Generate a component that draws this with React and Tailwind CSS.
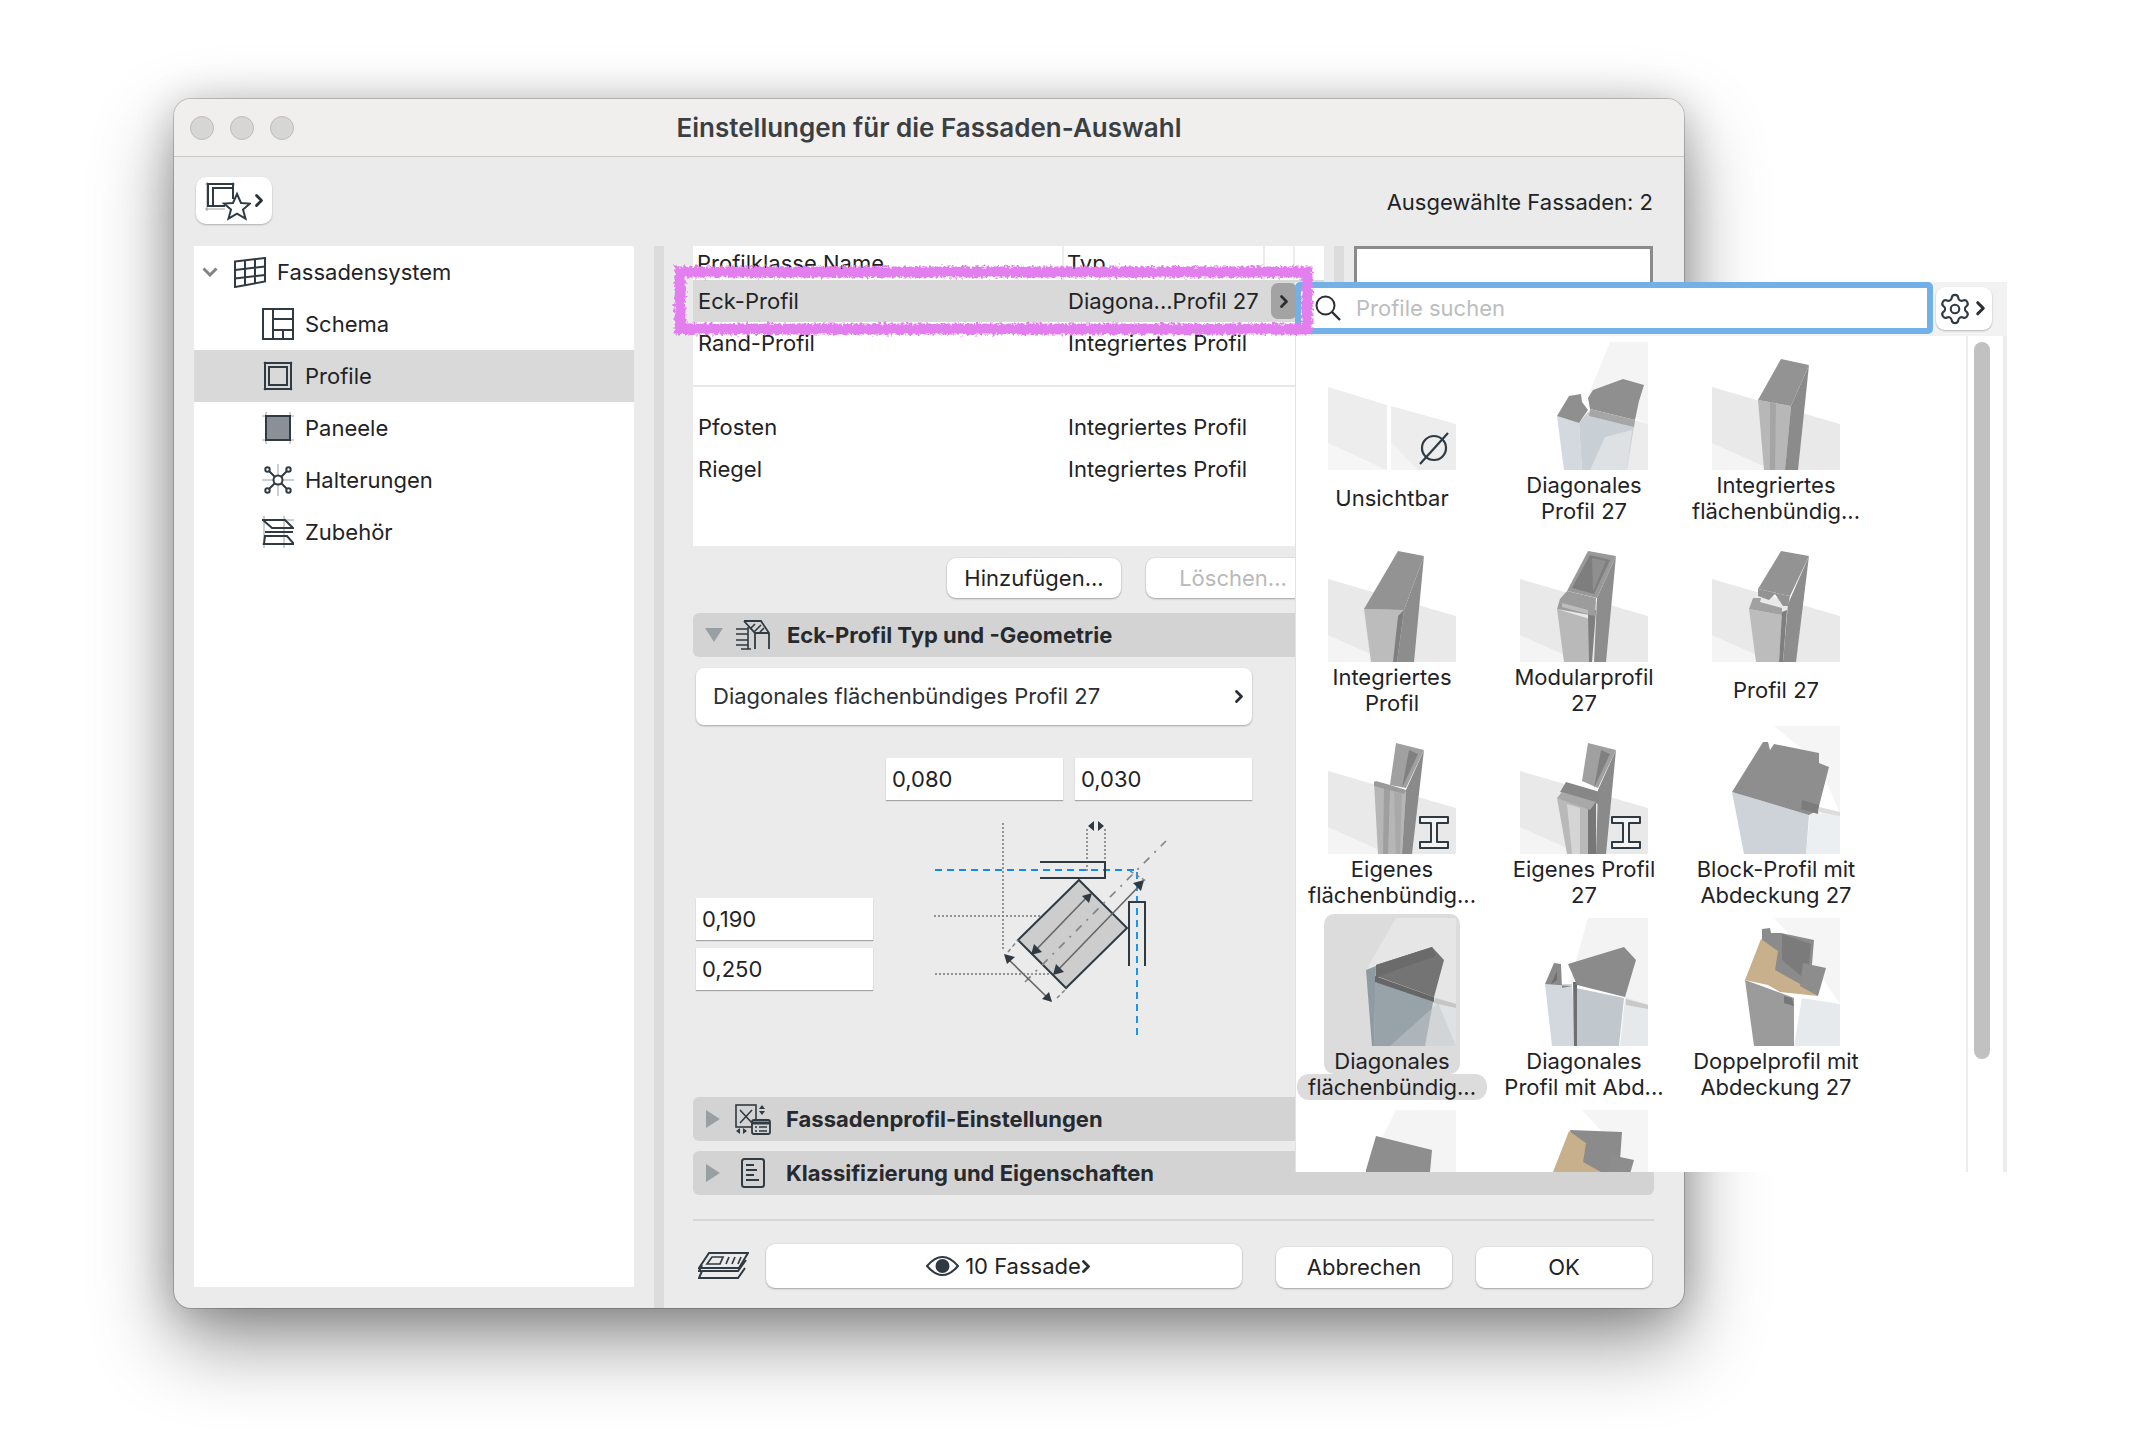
import React from "react";
import { Settings } from "lucide-react";

const INK = "#2f3a42";

const FRAME = ({ children, w = 32, h = 32, vb, className = "" }) => (
  <svg width={w} height={h} viewBox={vb || `0 0 ${w} ${h}`} fill="none" stroke={INK} strokeWidth="2" className={`shrink-0 ${className}`}>
    {children}
  </svg>
);

const Chev = ({ size = 12, sw = 2.6, color = "#2b2f33", className = "" }) => (
  <svg width={size} height={size * 1.5} viewBox="0 0 12 18" fill="none" stroke={color} strokeWidth={sw * 1.3} strokeLinecap="round" strokeLinejoin="round" className={`shrink-0 ${className}`}>
    <path d="M3 3l6 6-6 6" />
  </svg>
);

const IconFacade = () => (
  <FRAME w={32} h={31}>
    <path d="M1 4.5L31 1v23.5L1 30z" />
    <path d="M1 13l30-3.5M1 21.5l30-3.5M11 3.5v25.5M21 2.5v23.5" />
  </FRAME>
);
const IconSchema = () => (
  <FRAME>
    <rect x="1" y="1" width="30" height="30" />
    <path d="M11 1v30M11 11h20M11 22h20M21 22v9" />
  </FRAME>
);
const IconProfile = () => (
  <FRAME>
    <path d="M1 3h30M1 29h30M3 1v30M29 1v30" stroke="#9aa0a4" strokeWidth="1" />
    <rect x="3" y="3" width="26" height="26" />
    <rect x="7" y="7" width="18" height="18" />
  </FRAME>
);
const IconPanel = () => (
  <FRAME>
    <path d="M0 4h32M0 28h32M4 0v32M28 0v32" stroke="#9aa0a4" strokeWidth="1" />
    <rect x="4" y="4" width="24" height="24" fill="#8a9095" />
  </FRAME>
);
const IconBracket = () => (
  <FRAME>
    <path d="M16 0v32M0 16h32" stroke="#9aa0a4" strokeWidth="1" />
    <circle cx="16" cy="16" r="4.5" fill="#fff" />
    <path d="M12.5 12.5L7 7M19.5 12.5L25 7M12.5 19.5L7 25M19.5 19.5L25 25" />
    <circle cx="5.5" cy="5.5" r="2.2" fill="#fff" />
    <circle cx="26.5" cy="5.5" r="2.2" fill="#fff" />
    <circle cx="5.5" cy="26.5" r="2.2" fill="#fff" />
    <circle cx="26.5" cy="26.5" r="2.2" fill="#fff" />
  </FRAME>
);
const IconAccessory = () => (
  <FRAME>
    <path d="M2 0v32M22 0v32M0 4h32M0 28h32" stroke="#9aa0a4" strokeWidth="1" />
    <path d="M1 4l9 8h21l-8-8z" />
    <path d="M3 16h28" />
    <path d="M3 20l-1 8h30l-7-8z" />
  </FRAME>
);

const SideRow = ({ icon, label, selected, top }) => (
  <div className={`flex h-[52px] items-center ${top ? "pl-2" : "pl-[68px]"} ${selected ? "bg-[#d9d9d9]" : ""}`}>
    {top && (
      <svg width="16" height="10" viewBox="0 0 16 10" fill="none" stroke="#808487" strokeWidth="3" className="mr-4 shrink-0">
        <path d="M1.5 1.5L8 8l6.5-6.5" />
      </svg>
    )}
    {icon}
    <span className="ml-[11px]">{label}</span>
  </div>
);

const Button = ({ children, className = "" }) => (
  <div className={`flex items-center justify-center rounded-[9px] bg-white shadow-[0_1px_2px_rgba(0,0,0,0.28),0_0_0_1px_rgba(0,0,0,0.03)] ${className}`}>{children}</div>
);

const Tri = ({ down }) =>
  down ? (
    <svg width="18" height="14" viewBox="0 0 18 14" className="ml-3 shrink-0"><path d="M0 0h18l-9 14z" fill="#98a0a4" /></svg>
  ) : (
    <svg width="14" height="18" viewBox="0 0 14 18" className="ml-[13px] shrink-0"><path d="M0 0l14 9-14 9z" fill="#98a0a4" /></svg>
  );

const Section = ({ down, icon, title, iconBox }) => (
  <div className="flex h-[44px] items-center rounded-[6px] bg-[#d3d3d3]">
    <Tri down={down} />
    <div className={`flex items-center justify-center ${iconBox}`}>{icon}</div>
    <span className="font-bold text-[#262a2e]">{title}</span>
  </div>
);

const IconEck = () => (
  <FRAME w={34} h={30}>
    <path d="M0 9h12M0 14h12M0 20h12M0 25h12M12 7v22M5 29h10" strokeWidth="1.6" />
    <path d="M8 1h17l8 12v16M19 13v16M8 1l11 12h14" strokeWidth="1.8" />
    <path d="M14 9l5-5M18 12l7-7M24 12l4-4" strokeWidth="1.6" />
  </FRAME>
);
const IconSettingsSec = () => (
  <FRAME w={36} h={31}>
    <rect x="1" y="1" width="20" height="22" strokeWidth="1.6" />
    <path d="M5 6l12 13M17 6L5 19" strokeWidth="1.6" />
    <path d="M27 1l-3 4h6zM27 11l-3-4h6z" fill={INK} stroke="none" />
    <path d="M1 27l4-3v6zM12 27l-4-3v6z" transform="translate(0 0)" fill={INK} stroke="none" />
    <rect x="17" y="16" width="18" height="14" rx="2" fill="#d3d3d3" strokeWidth="1.8" />
    <path d="M17 19h18" strokeWidth="3" />
    <path d="M20 23h2M20 27h2M24 23h8M24 27h8" strokeWidth="1.5" />
  </FRAME>
);
const IconDoc = () => (
  <FRAME w={24} h={30}>
    <rect x="1" y="1" width="22" height="28" rx="2.5" />
    <path d="M5 7h8M5 12h11M5 17h8M5 22h13" strokeWidth="1.8" />
  </FRAME>
);
const IconLayers = () => (
  <FRAME w={51} h={28}>
    <path d="M11 2h39l-9 15H1z" />
    <path d="M14 6h11l-3 7H9zM31 6l-3 7M37 6l-3 7M43 6l-3 7" strokeWidth="1.7" />
    <path d="M4 14l-3 6h39l8-11M4 20l-3 7h39l7-10" />
  </FRAME>
);

const Input = ({ value, className = "" }) => (
  <div className={`flex h-[42px] w-[177px] items-center bg-white pl-[6px] shadow-[0_1px_1px_rgba(0,0,0,0.3)] ${className}`}>{value}</div>
);

const Diagram = () => (
  <svg width="300" height="271" viewBox="0 9 300 271" fill="none" className="ml-[28px] shrink-0">
    <g stroke="#777" strokeWidth="1.5" strokeDasharray="2 2">
      <path d="M103 32v128M34 125h136M35 183h115M187 38v42M205 38v32" />
    </g>
    <path d="M35 79h202v169" stroke="#0a8cf0" strokeWidth="1.8" strokeDasharray="7 5" />
    <path d="M140 71h65v16h-65M229 175v-64h16v64" stroke={INK} strokeWidth="2" />
    <path d="M179 89l48 48-61 60-48-48z" fill="#cdcdcd" stroke={INK} strokeWidth="2" />
    <path d="M125 191L266 50" stroke="#858585" strokeWidth="1.7" strokeDasharray="8 7 2 7" />
    <path d="M108 161l10-12M157 207l10-10M230 80l16 10" stroke="#858585" strokeWidth="1.5" strokeDasharray="4 3" />
    <path d="M188 105l-55 57M243 91l-88 91M106 166l45 44" stroke="#666" strokeWidth="1.6" />
    <g fill={INK}>
      <path d="M192 102l-3 10-7-7zM131 164l3-11 8 8zM244 89l-3 11-8-8zM153 184l3-11 8 8zM104 163l11 3-8 7zM152 211l-3-10-7 7z" />
      <path d="M188 35l6-5v10zM204 35l-6-5v10z" />
    </g>
  </svg>
);

const Panel = () => (
  <>
    <polygon points="0,45 128,82 128,128 0,128" fill="#e9e9e9" />
    <polygon points="0,101 60,128 0,128" fill="#f4f4f4" />
  </>
);
const Glass = ({ l = 68, b = 54, c = "#f4f4f4" }) => <polygon points={`${l + 22},0 128,0 128,82 ${l},${b}`} fill={c} />;

const T = {
  unsichtbar: (
    <>
      <polygon points="0,45 59,63 59,128 0,128" fill="#ededed" />
      <polygon points="0,101 59,128 0,128" fill="#f6f6f6" />
      <polygon points="63,64 128,82 128,128 63,128" fill="#ededed" />
      <polygon points="63,100 90,128 63,128" fill="#f4f4f4" />
      <circle cx="106" cy="106" r="12" fill="none" stroke={INK} strokeWidth="2.2" />
      <path d="M92 122L120 91" stroke={INK} strokeWidth="2.2" />
    </>
  ),
  diag27: (
    <>
      <Glass />
      <polygon points="115,78 128,82 128,128 105,128" fill="#ececec" />
      <polygon points="37,74 59,81 62,128 44,128" fill="#d3d9de" />
      <polygon points="59,81 68,70 115,78 107,128 62,128" fill="#c8d0d6" />
      <polygon points="70,128 85,95 112,88 107,128" fill="#dde1e4" />
      <polygon points="37,74 49,54 61,52 62,60 68,68 59,81" fill="#8f8f8f" />
      <polygon points="73,48 103,37 124,43 119,59 115,78 70,67 68,56" fill="#8f8f8f" />
      <polygon points="70,67 115,78 114,85 69,74" fill="#a6a6a6" />
    </>
  ),
  intFlush: (
    <>
      <Panel />
      <polygon points="46,58 79,64 73,128 52,128" fill="#b7b7b7" />
      <polygon points="58,60 64,62 63,128 58,128" fill="#a5a5a5" />
      <polygon points="97,23 79,64 73,128 86,128" fill="#8b8b8b" />
      <polygon points="69,17 97,23 79,64 46,58" fill="#939393" />
    </>
  ),
  intProfil: (
    <>
      <Panel />
      <polygon points="36,75 76,76 69,128 43,128" fill="#bcbcbc" />
      <polygon points="70,82 76,76 69,128 65,128" fill="#7f7f7f" />
      <polygon points="96,22 76,76 69,128 86,128" fill="#8d8d8d" />
      <polygon points="70,17 96,22 76,76 36,75" fill="#939393" />
    </>
  ),
  modular: (
    <>
      <Panel />
      <polygon points="37,75 70,85 70,128 44,128" fill="#b9b9b9" />
      <polygon points="68,80 76,76 72,128 69,128" fill="#7f7f7f" />
      <polygon points="96,22 77,64 74,128 86,128" fill="#8d8d8d" />
      <polygon points="68,17 96,22 77,64 47,57" fill="#999" />
      <polygon points="70,21 90,26 74,60 52,54" fill="#7e7e7e" />
      <polygon points="72,24 86,27 73,58" fill="#8f8f8f" />
      <polygon points="40,65 47,57 76,64 75,82 37,75" fill="#9c9c9c" />
      <polygon points="42,69 68,76 68,80 42,73" fill="#bdbdbd" />
    </>
  ),
  profil27: (
    <>
      <Panel />
      <polygon points="37,75 70,81 67,128 44,128" fill="#bcbcbc" />
      <polygon points="70,78 75,76 71,128 67,128" fill="#7f7f7f" />
      <polygon points="97,22 76,70 71,128 84,128" fill="#8d8d8d" />
      <polygon points="69,17 97,22 78,62 46,55" fill="#939393" />
      <polygon points="46,55 78,62 76,72 71,72 63,60 57,66 46,62" fill="#939393" />
      <polygon points="37,75 41,64 49,64 48,68 70,74 70,81" fill="#a1a1a1" />
    </>
  ),
  eigenFlush: (
    <>
      <Panel />
      <polygon points="46,56 78,64 74,128 50,128" fill="#b6b6b6" />
      <polygon points="56,62 62,64 60,128 55,128" fill="#9f9f9f" />
      <polygon points="66,66 74,68 72,128 68,128" fill="#a9a9a9" />
      <polygon points="96,24 78,64 74,128 84,128" fill="#8a8a8a" />
      <polygon points="68,17 96,24 78,62 62,59" fill="#a0a0a0" />
      <polygon points="81,24 74,62 90,28" fill="#808080" />
      <polygon points="46,56 48,55 62,59 78,64 76,68 46,60" fill="#9a9a9a" />
      <path d="M92 91h28v6h-11v19h11v6H92v-6h11V97H92z" fill="#f4f4f4" stroke={INK} strokeWidth="2" strokeLinejoin="round" />
    </>
  ),
  eigen27: (
    <>
      <Panel />
      <polygon points="37,72 70,76 68,128 47,128" fill="#b9b9b9" />
      <polygon points="47,78 60,82 60,128 52,128" fill="#d5d5d5" />
      <polygon points="68,80 76,76 76,128 68,128" fill="#777" />
      <polygon points="96,24 78,64 76,128 86,128" fill="#8a8a8a" />
      <polygon points="68,17 96,24 78,62 62,55" fill="#a0a0a0" />
      <polygon points="81,24 74,62 90,28" fill="#808080" />
      <polygon points="46,56 80,66 78,78 40,66" fill="#878787" />
      <polygon points="37,72 42,66 76,76 70,84" fill="#a8a8a8" />
      <path d="M92 91h28v6h-11v19h11v6H92v-6h11V97H92z" fill="#f4f4f4" stroke={INK} strokeWidth="2" strokeLinejoin="round" />
    </>
  ),
  block: (
    <>
      <polygon points="62,0 128,0 128,88 107,37" fill="#f5f5f5" />
      <polygon points="98,87 128,88 128,128 94,128" fill="#eceff1" />
      <polygon points="20,66 97,89 94,128 32,128" fill="#cdd3d8" />
      <polygon points="51,16 56,16 58,24 62,18 107,27 107,37 117,41 106,84 97,89 20,66" fill="#8e8e8e" />
      <polygon points="90,74 107,79 106,88 89,83" fill="#7c7c7c" />
      <polygon points="107,81 128,86 128,90 106,86" fill="#dcdcdc" />
    </>
  ),
  diagFlushSel: (
    <>
      <polygon points="68,0 128,0 128,86 48,64 38,52" fill="#e6e6e6" />
      <polygon points="106,79 128,85 128,128 97,128" fill="#dfe2e4" />
      <polygon points="38,52 48,48 46,128 44,128" fill="#8f9ba3" />
      <polygon points="47,64 106,79 97,128 46,128" fill="#98a2a9" />
      <polygon points="62,128 110,85 128,128 97,128" fill="#c4c8cb" opacity="0.5" />
      <polygon points="48,47 104,29 116,42 106,79 48,58" fill="#747474" />
      <polygon points="48,47 104,29 108,38 60,55 48,60" fill="#6b6b6b" />
      <polygon points="47,58 106,79 106,84 47,64" fill="#666" />
      <polygon points="107,80 128,86 128,90 106,85" fill="#c6c6c6" />
    </>
  ),
  diagAbd: (
    <>
      <polygon points="68,0 128,0 128,86 50,64" fill="#f3f3f3" />
      <polygon points="105,79 128,86 128,128 100,128" fill="#e6e9eb" />
      <polygon points="25,66 52,66 56,128 32,128" fill="#d2d8dd" />
      <polygon points="56,70 104,80 99,128 56,128" fill="#c0c8ce" />
      <polygon points="53,64 57,64 57,128 54,128" fill="#6f6f6f" />
      <polygon points="25,66 34,45 41,46 42,70 52,68" fill="#8a8a8a" />
      <polygon points="31,66 37,53 37,62" fill="#6f6f6f" />
      <polygon points="48,46 104,29 116,42 105,79 57,67" fill="#8b8b8b" />
      <polygon points="106,81 128,87 128,91 106,87" fill="#c9c9c9" />
    </>
  ),
  doppel: (
    <>
      <polygon points="62,0 128,0 128,86 90,30" fill="#f5f5f5" />
      <polygon points="90,80 128,86 128,128 82,128" fill="#e7eaec" />
      <polygon points="33,62 82,80 82,128 42,128" fill="#9b9b9b" />
      <polygon points="50,11 58,10 59,15 69,15 102,22 98,70 76,75 50,30" fill="#8b8b8b" />
      <polygon points="70,16 99,26 95,63 70,42" fill="#7b7b7b" />
      <polygon points="33,62 49,21 66,33 63,52 90,67 106,78 68,74 56,67" fill="#c9b08d" />
      <polygon points="91,45 114,50 106,78 88,68" fill="#8d8d8d" />
      <polygon points="72,78 80,80 82,88 72,85" fill="#777" />
    </>
  ),
  row5a: (
    <>
      <polygon points="68,0 128,0 128,128 38,60" fill="#f4f4f4" />
      <polygon points="38,60 48,26 104,40 96,128 38,128" fill="#8e8e8e" />
    </>
  ),
  row5b: (
    <>
      <polygon points="62,0 128,0 128,86 90,30" fill="#f5f5f5" />
      <polygon points="50,20 102,22 98,80 60,60" fill="#8b8b8b" />
      <polygon points="33,62 49,21 66,33 63,52 90,67 106,78 68,74 56,67" fill="#c9b08d" />
      <polygon points="91,45 114,50 106,78 88,68" fill="#8d8d8d" />
    </>
  ),
};

const items = [
  { t: "unsichtbar", l: ["Unsichtbar"] },
  { t: "diag27", l: ["Diagonales", "Profil 27"] },
  { t: "intFlush", l: ["Integriertes", "flächenbündig..."] },
  { t: "intProfil", l: ["Integriertes", "Profil"] },
  { t: "modular", l: ["Modularprofil", "27"] },
  { t: "profil27", l: ["Profil 27"] },
  { t: "eigenFlush", l: ["Eigenes", "flächenbündig..."] },
  { t: "eigen27", l: ["Eigenes Profil", "27"] },
  { t: "block", l: ["Block-Profil mit", "Abdeckung 27"] },
  { t: "diagFlushSel", l: ["Diagonales", "flächenbündig..."], sel: true },
  { t: "diagAbd", l: ["Diagonales", "Profil mit Abd..."] },
  { t: "doppel", l: ["Doppelprofil mit", "Abdeckung 27"] },
  { t: "row5a", l: [] },
  { t: "row5b", l: [] },
];

const Cell = ({ t, l, sel }) => (
  <div className="flex w-[192px] flex-col items-center">
    <div className={`rounded-t-[10px] px-[4px] pb-[2px] pt-[4px] ${sel ? "bg-[#dcdcdc]" : ""}`}>
      <svg width="128" height="128" viewBox="0 0 128 128" className="block">{T[t]}</svg>
    </div>
    <div className="flex h-[52px] flex-col items-center justify-center text-center leading-[26px]">
      {l.map((s, i) => (
        <div key={s} className={sel ? (i === 0 ? "w-[136px] rounded-b-[10px] bg-[#dcdcdc]" : "w-[190px] rounded-[12px] bg-[#dcdcdc]") : "whitespace-nowrap"}>{s}</div>
      ))}
    </div>
  </div>
);

const Popover = () => (
  <div className="absolute left-[1295px] top-[282px] flex h-[890px] w-[712px] flex-col overflow-hidden bg-white">
    <div className="flex h-[54px] shrink-0 items-start bg-[#f2f2f2]">
      <div className="flex h-[52px] w-[638px] items-center rounded-[5px] border-[6px] border-[#72b0e8] bg-white pl-[14px]">
        <svg width="26" height="26" viewBox="0 0 26 26" fill="none" stroke="#2b2f33" strokeWidth="2" className="shrink-0">
          <circle cx="10.5" cy="10.5" r="9" />
          <path d="M17 17l8 8" strokeWidth="2.4" />
        </svg>
        <span className="ml-[15px] text-[#bdbdbd]">Profile suchen</span>
      </div>
      <div className="ml-[3px] mt-[5px] flex h-[43px] w-[56px] items-center rounded-[9px] bg-white pl-[2px] shadow-[0_1px_2px_rgba(0,0,0,0.25)]">
        <Settings size={34} strokeWidth={1.5} color={INK} />
        <Chev size={11} className="ml-[3px]" />
      </div>
    </div>
    <div className="flex flex-1 overflow-hidden">
      <div className="grid w-[671px] shrink-0 grid-cols-[repeat(3,192px)] content-start gap-y-[6px] border-l border-[#e2e2e2] pt-[2px]">
        {items.map((it) => <Cell key={it.t} {...it} />)}
      </div>
      <div className="flex flex-1 justify-start border-l-2 border-r-4 border-[#ececec] pl-[6px] pt-[6px]">
        <div className="h-[717px] w-[16px] rounded-full bg-[#c1c1c1]" />
      </div>
    </div>
  </div>
);

const Highlight = () => (
  <svg width="660" height="90" viewBox="0 0 660 90" fill="none" className="absolute left-[664px] top-[256px]">
    <filter id="rough" x="-5%" y="-30%" width="110%" height="160%">
      <feTurbulence type="fractalNoise" baseFrequency="0.35" numOctaves="2" seed="4" />
      <feDisplacementMap in="SourceGraphic" scale="7" />
    </filter>
    <rect x="16" y="16" width="627" height="57" stroke="#e27eed" strokeWidth="11" filter="url(#rough)" />
  </svg>
);

const TableRow = ({ a, b, selected }) => (
  <div className={`flex h-[42px] items-center pl-[5px] ${selected ? "bg-[#d9d9d9]" : ""}`}>
    <span className="w-[370px]">{a}</span>
    <span>{b}</span>
    {selected && (
      <div className="ml-[12px] flex h-[36px] w-[26px] items-center justify-center rounded-[7px] bg-[#a3a3a3]">
        <Chev size={10} />
      </div>
    )}
  </div>
);

export default function App() {
  return (
    <div className="relative h-[1456px] w-[2130px] overflow-hidden bg-white pl-[174px] pt-[99px] text-[22px] text-[#1f2326] [font-family:Inter,'Liberation_Sans',sans-serif]">
      <div className="flex h-[1209px] w-[1510px] flex-col overflow-hidden rounded-[17px] bg-[#ebebeb] shadow-[0_0_0_1px_rgba(0,0,0,0.18),0_34px_80px_rgba(0,0,0,0.42),0_4px_40px_rgba(0,0,0,0.2)]">
        <div className="relative flex h-[58px] shrink-0 items-center justify-center border-b border-[#c9c9c9] bg-[#f0efee]">
          <div className="absolute left-4 flex gap-4">
            {[0, 1, 2].map((i) => (
              <div key={i} className="h-6 w-6 rounded-full border border-[#bdbdbb] bg-[#d6d6d4]" />
            ))}
          </div>
          <span className="text-[26px] font-semibold text-[#3c3f42]">Einstellungen für die Fassaden-Auswahl</span>
        </div>

        <div className="flex h-[89px] shrink-0 items-start justify-between pl-[22px] pr-[31px] pt-5">
          <div className="flex h-[47px] w-[76px] items-center rounded-[10px] bg-white pl-[9px] shadow-[0_1px_2px_rgba(0,0,0,0.25)]">
            <svg width="46" height="40" viewBox="0 0 46 40" fill="none" stroke={INK} strokeWidth="2" className="shrink-0">
              <path d="M0 3h30M0 28h20M2 1v29M28 1v16" stroke="#9aa0a4" strokeWidth="1" />
              <path d="M20 25H3V3h25v15" />
              <path d="M8 25V7h20" />
              <path d="M32 13l4 9 9 .6-7 6 2.5 9-8.500-5-8.500 5L26 28.600l-7-6 9-.600z" fill="#fff" />
            </svg>
            <Chev size={10} className="ml-[3px]" />
          </div>
          <span className="mt-[9px]">Ausgewählte Fassaden: 2</span>
        </div>

        <div className="flex flex-1">
          <div className="mb-[21px] ml-5 w-[440px] shrink-0 bg-white">
            <SideRow top icon={<IconFacade />} label="Fassadensystem" />
            <SideRow icon={<IconSchema />} label="Schema" />
            <SideRow selected icon={<IconProfile />} label="Profile" />
            <SideRow icon={<IconPanel />} label="Paneele" />
            <SideRow icon={<IconBracket />} label="Halterungen" />
            <SideRow icon={<IconAccessory />} label="Zubehör" />
          </div>
          <div className="ml-5 w-[10px] shrink-0 bg-[#dcdcdc]" />

          <div className="ml-[29px] w-[961px] shrink-0">
            <div className="flex h-[300px]">
              <div className="w-[631px] shrink-0 bg-white">
                <div className="relative flex h-[34px] items-center pl-[4px]">
                  <span className="w-[370px]">Profilklasse Name</span>
                  <span>Typ</span>
                  <div className="absolute left-[369px] top-0 h-full w-[2px] bg-[#ececec]" />
                  <div className="absolute left-[570px] top-0 h-full w-[2px] bg-[#ececec]" />
                  <div className="absolute left-[600px] top-0 h-full w-[2px] bg-[#ececec]" />
                </div>
                <TableRow selected a="Eck-Profil" b="Diagona...Profil 27" />
                <TableRow a="Rand-Profil" b="Integriertes Profil" />
                <div className="h-[21px]" />
                <div className="h-[2px] bg-[#e8e8e8]" />
                <div className="h-[19px]" />
                <TableRow a="Pfosten" b="Integriertes Profil" />
                <TableRow a="Riegel" b="Integriertes Profil" />
              </div>
              <div className="ml-[10px] h-[120px] w-[10px] shrink-0 bg-[#dcdcdc]" />
              <div className="ml-[10px] h-[60px] w-[299px] shrink-0 border-[3px] border-[#8b8b8b] bg-white" />
            </div>

            <div className="mt-3 flex gap-[25px] pl-[254px]">
              <Button className="h-[40px] w-[174px]">Hinzufügen...</Button>
              <Button className="h-[40px] w-[174px] bg-[#f0f0f0] text-[#b9b9b9] shadow-[0_0_0_1px_rgba(0,0,0,0.03),0_1px_1px_rgba(0,0,0,0.08)]">Löschen...</Button>
            </div>

            <div className="mt-[15px]">
              <Section down icon={<IconEck />} title="Eck-Profil Typ und -Geometrie" iconBox="w-[64px] pl-[4px] justify-start ml-[9px] mr-[-9px]" />
            </div>

            <div className="ml-[3px] mt-[11px] flex h-[57px] w-[556px] items-center justify-between rounded-[8px] bg-white pl-[17px] pr-[8px] text-[#2b2f33] shadow-[0_1px_2px_rgba(0,0,0,0.3)]">
              <span>Diagonales flächenbündiges Profil 27</span>
              <Chev size={10} />
            </div>

            <div className="mt-[33px] flex gap-[12px] pl-[193px]">
              <Input value="0,080" />
              <Input value="0,030" />
            </div>

            <div className="ml-[3px] flex h-[297px]">
              <div className="flex w-[176px] shrink-0 flex-col gap-2 pt-[98px]">
                <Input value="0,190" className="w-[176px]" />
                <Input value="0,250" className="w-[176px]" />
              </div>
              <Diagram />
            </div>

            <div className="flex flex-col gap-[10px]">
              <Section icon={<IconSettingsSec />} title="Fassadenprofil-Einstellungen" iconBox="w-[66px]" />
              <Section icon={<IconDoc />} title="Klassifizierung und Eigenschaften" iconBox="w-[66px]" />
            </div>

            <div className="mt-[24px] h-[2px] bg-[#d6d6d6]" />

            <div className="mt-[23px] flex items-end">
              <div className="mb-[9px] ml-[5px] w-[68px] shrink-0"><IconLayers /></div>
              <Button className="h-[44px] w-[476px] justify-between pl-[18px] pr-[9px]">
                <span className="flex items-center">
                  <svg width="33" height="20" viewBox="0 0 33 20" fill="none" stroke={INK} strokeWidth="2" className="mr-[6px]">
                    <path d="M1 10C7 3 12 1 16.500 1S26 3 32 10c-6 7-11 9-15.500 9S7 17 1 10z" />
                    <circle cx="16.500" cy="10" r="6" fill={INK} />
                  </svg>
                  10 Fassade
                </span>
                <Chev size={10} />
              </Button>
              <Button className="ml-[34px] h-[41px] w-[176px]">Abbrechen</Button>
              <Button className="ml-[24px] h-[41px] w-[176px]">OK</Button>
            </div>
          </div>
        </div>
      </div>
      <Popover />
      <Highlight />
    </div>
  );
}
